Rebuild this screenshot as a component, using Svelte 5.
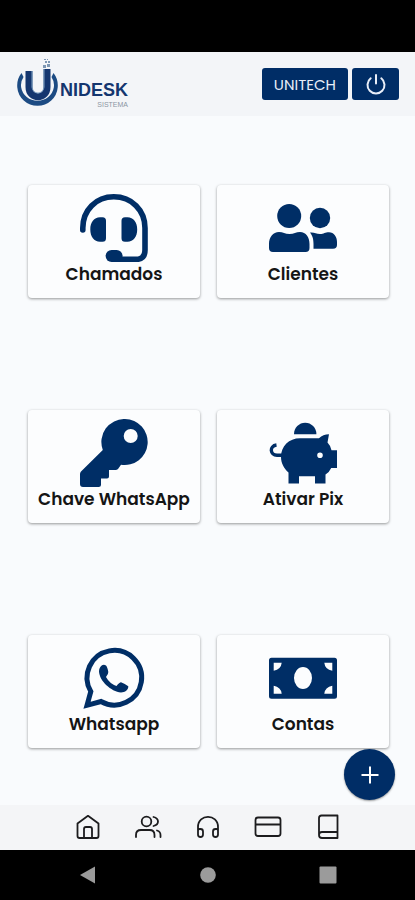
<script>
  const cards = [
    { id: 'headset', label: 'Chamados' },
    { id: 'users', label: 'Clientes' },
    { id: 'key', label: 'Chave WhatsApp' },
    { id: 'pig', label: 'Ativar Pix' },
    { id: 'whatsapp', label: 'Whatsapp' },
    { id: 'money', label: 'Contas' }
  ];
  const tabs = [
    { id: 'home', label: 'Início' },
    { id: 'people', label: 'Clientes' },
    { id: 'headphones', label: 'Chamados' },
    { id: 'card', label: 'Contas' },
    { id: 'book', label: 'Manual' }
  ];
</script>

<div class="screen">
  <div class="status"></div>

  <header>
    <div class="logo">
      <svg class="mark" viewBox="0 0 42 50" aria-hidden="true">
        <path d="M5.500 14A20.300 20.300 0 1 0 37.500 14L35.500 18A16.500 15.500 0 1 1 7.500 18z" fill="#1c4b83" />
        <g fill="none">
          <path d="M13 12V28C13 41 31 41 31 28V10" stroke="#14366f" stroke-width="7" />
          <path d="M16 12V28C17 36 27 36 28 28V10" stroke="#7fa2c4" stroke-width="1" />
        </g>
        <g fill="#7d97b3">
          <path d="M27 6h3v3h-3zM31 5h3v3h-3zM29 2h2v2h-2zM32 2h2v2h-2zM28 0h2v1h-2zM31 0h1v1h-1z" />
        </g>
      </svg>
      <div class="wordmark">
        <span class="name">NIDESK</span>
        <span class="sub">SISTEMA</span>
      </div>
    </div>
    <div class="actions">
      <button class="btn company">UNITECH</button>
      <button class="btn power" aria-label="Sair">
        <svg viewBox="0 0 24 24" width="24" height="24" fill="none" stroke="currentColor" stroke-width="2" stroke-linecap="round">
          <path d="M12 3V11.500M6.700 6.300a8.500 8.500 0 1 0 10.600 0" />
        </svg>
      </button>
    </div>
  </header>

  <main>
    {#each cards as card}
      <button class="card">
        <svg class="icon" viewBox="0 0 68 68" fill="currentColor" aria-hidden="true">
          {#if card.id === 'headset'}
            <path d="M2.800 36V34C2.800 16 16 2.800 33.800 2.800S65 16 65 34V56Q65 65.400 56 65.400H38" fill="none" stroke="currentColor" stroke-width="5.600" stroke-linecap="round" />
            <path d="M20 23.300h2.500q3.500 0 3.500 3.500v17.400q0 3.500-3.500 3.500H20c-6 0-9.700-5-9.700-12.200s3.700-12.200 9.700-12.200z" />
            <path d="M47.500 23.300H45q-3.500 0-3.500 3.500v17.400q0 3.500 3.500 3.500h2.500c6 0 9.700-5 9.700-12.200s-3.700-12.200-9.700-12.200z" />
            <rect x="25.600" y="56" width="17" height="12" rx="6" />
          {:else if card.id === 'users'}
            <circle cx="20.200" cy="22" r="12" />
            <circle cx="51" cy="24" r="10.200" />
            <path d="M10 38C14 38 16 40 20.500 40S27 38 31 38C37 38 40.500 43 40.500 50V54Q40.500 58 36.500 58H4Q0 58 0 54V50C0 43 4 38 10 38z" />
            <path d="M41 38.500C45.500 38 47 40 51 40S56 38.300 60 38.300C65 38.300 68 43 68 48V51Q68 54.700 64 54.700H44.500V50C44.500 44.500 43.500 42 41 38.500z" />
          {:else if card.id === 'key'}
            <path fill-rule="evenodd" d="M45 0A23 23 0 0 0 22.800 31L1 52.500Q0 53.500 0 55V65Q0 68 3 68H18.500Q21 68 21 65.500V59.500H27Q29 59.500 29 57.500V51H35.500Q37 51 38 50L41 45.700A23 23 0 1 0 45 0zM50.700 10a7 7 0 1 1 0 14a7 7 0 0 1 0-14z" />
          {:else if card.id === 'pig'}
            <path d="M25 15.300A11.200 11.600 0 0 1 47.400 15.300z" />
            <path d="M14 36.300H8C1 36 0 27 7.500 26" fill="none" stroke="currentColor" stroke-width="3.400" />
            <path fill-rule="evenodd" d="M31 19.300H50Q54 15.300 60 15.300L58.500 23.500Q61.500 26.500 62.500 31.300H68V49H62.200Q60.500 53 56.500 55.500V64.500H46V57.300H30V64.500H19.500V53.500C15 49.500 12 44 12 38C12 27 20 19.300 31 19.300zM51 33.500a2.800 2.800 0 1 0 0 5.600a2.800 2.800 0 0 0 0-5.600z" />
          {:else if card.id === 'whatsapp'}
            <path d="M7 61.300L10.800 47.500A27.300 27.300 0 1 1 21 57.500z" fill="none" stroke="currentColor" stroke-width="5" stroke-linejoin="miter" />
            <path d="M22 21.300Q24 20.300 26 21.500Q27.500 23 28.300 28Q28.500 30 26 33Q29.500 39.500 36.500 42Q39.500 38.300 41 38.300Q46 40.300 48.300 42.300C48.500 46 45 48.500 41 48.500C31 47.500 19.500 37 19 27.500Q19 23.500 22 21.300z" />
          {:else}
            <path fill-rule="evenodd" d="M2.500 13.700H65.500Q68 13.700 68 16.200V52.200Q68 54.700 65.500 54.700H2.500Q0 54.700 0 52.200V16.200Q0 13.700 2.500 13.700zM34 23a9 11 0 1 0 0 22a9 11 0 0 0 0-22zM4.700 18.700V26.700Q12 25.500 12.700 18.700zM63.300 18.700H55.300Q56 25.500 63.300 26.700zM4.700 49.700H12.700Q12 43 4.700 41.700zM63.300 49.700V41.700Q56 43 55.300 49.700z" />
          {/if}
        </svg>
        <span class="label">{card.label}</span>
      </button>
    {/each}
  </main>

  <nav class="tabs">
    {#each tabs as tab}
      <a href="#{tab.id}" aria-label={tab.label}>
        <svg viewBox="0 0 28 28" width="28" height="28" fill="none" stroke="currentColor" stroke-width="1.800" stroke-linecap="round" stroke-linejoin="round">
          {#if tab.id === 'home'}
            <path d="M3.500 10.500L14 2.800L24.500 10.500V23Q24.500 25 22.500 25H5.500Q3.500 25 3.500 23zM10 25V16Q10 14 12 14H16Q18 14 18 16V25" />
          {:else if tab.id === 'people'}
            <circle cx="12.500" cy="8.500" r="4.800" />
            <path d="M2 24V22Q2 17 7 17H15.500Q20.500 17 20.500 22V24M19.500 4C25.500 5.500 25.500 11.500 19.500 13M23 17.500Q26.500 18.500 26.500 22V24" />
          {:else if tab.id === 'headphones'}
            <path d="M4 20V14C4 0.500 24 0.500 24 14V20M4 21V17.500Q4 16 5.500 16H6.500Q9 16 9 18.500V21.500Q9 24 6.500 24T4 21.500zM24 21V17.500Q24 16 22.500 16H21.500Q19 16 19 18.500V21.500Q19 24 21.500 24T24 21.500z" />
          {:else if tab.id === 'card'}
            <path d="M4 4.500H24Q26.500 4.500 26.500 7V20.500Q26.500 23 24 23H4Q1.500 23 1.500 20.500V7Q1.500 4.500 4 4.500zM1.500 11.500H26.500" />
          {:else}
            <path d="M5 22V5Q5 2.500 7.500 2.500H23.500V25H8Q5 25 5 22Q5 19 8 19H23.500" />
          {/if}
        </svg>
      </a>
    {/each}
    <button class="fab" aria-label="Adicionar">
      <svg viewBox="0 0 20 20" width="20" height="20" fill="none" stroke="currentColor" stroke-width="2">
        <path d="M10 1.500V18.500M1.500 10H18.500" />
      </svg>
    </button>
  </nav>

  <div class="system">
    <button aria-label="Voltar">
      <svg viewBox="0 0 20 20" width="20" height="20"><path d="M2 10L17 1.500V18.500z" fill="currentColor" /></svg>
    </button>
    <button aria-label="Tela inicial">
      <svg viewBox="0 0 20 20" width="20" height="20"><circle cx="10" cy="10" r="7.800" fill="currentColor" /></svg>
    </button>
    <button aria-label="Recentes">
      <svg viewBox="0 0 20 20" width="20" height="20"><rect x="1.500" y="1.500" width="17" height="17" rx="1" fill="currentColor" /></svg>
    </button>
  </div>
</div>

<style>
  :global(body) {
    margin: 0;
  }
  .screen {
    display: flex;
    flex-direction: column;
    min-height: 100vh;
    background: #f9fbfd;
    font-family: Poppins, Inter, sans-serif;
  }
  button {
    margin: 0;
    padding: 0;
    border: 0;
    font-family: inherit;
    cursor: pointer;
  }
  svg {
    display: block;
  }
  .status {
    height: 52px;
    background: #000;
  }
  header {
    display: flex;
    align-items: center;
    justify-content: space-between;
    height: 64px;
    padding: 0 16px;
    background: #f3f5f8;
  }
  .logo {
    display: flex;
    align-items: center;
    gap: 2px;
  }
  .mark {
    width: 42px;
    height: 50px;
  }
  .wordmark {
    display: flex;
    flex-direction: column;
    align-items: flex-end;
    padding-top: 20px;
    font-family: "Liberation Sans", Arial, sans-serif;
  }
  .name {
    color: #14366f;
    font-size: 18px;
    font-weight: 700;
    line-height: 21px;
  }
  .sub {
    color: #8b96a3;
    font-size: 7px;
    line-height: 8px;
  }
  .actions {
    display: flex;
    gap: 4px;
  }
  .btn {
    display: flex;
    align-items: center;
    justify-content: center;
    height: 32px;
    border-radius: 3px;
    background: #002d66;
    color: #e8eef8;
  }
  .company {
    padding: 0 12px;
    font-size: 15px;
  }
  .power {
    width: 47px;
  }
  main {
    flex: 1;
    display: grid;
    grid-template-columns: 1fr 1fr;
    grid-auto-rows: 1fr;
    align-items: center;
    column-gap: 17px;
    padding: 13px 26px 1px 28px;
  }
  .card {
    display: flex;
    flex-direction: column;
    align-items: center;
    padding: 9px 0 12px;
    border-radius: 4px;
    background: #fcfdfe;
    box-shadow: 0 1px 3px rgba(0, 0, 0, 0.4);
    color: #002e66;
  }
  .icon {
    width: 68px;
    height: 68px;
  }
  .label {
    color: #151515;
    font-size: 17px;
    font-weight: 600;
    line-height: 24px;
  }
  .tabs {
    position: relative;
    display: flex;
    align-items: center;
    justify-content: center;
    gap: 32px;
    box-sizing: border-box;
    height: 45px;
    padding-bottom: 2px;
    background: #f4f5f7;
    color: #1c1c1e;
  }
  .tabs a {
    color: inherit;
  }
  .fab {
    position: absolute;
    right: 20px;
    bottom: 50px;
    display: flex;
    align-items: center;
    justify-content: center;
    width: 51px;
    height: 51px;
    border-radius: 50%;
    background: #002d66;
    box-shadow: 0 1px 2px rgba(0, 0, 0, 0.4);
    color: #fff;
  }
  .system {
    display: flex;
    align-items: center;
    justify-content: center;
    gap: 100px;
    height: 50px;
    background: #000;
  }
  .system button {
    background: none;
    color: #9b9b9b;
  }
</style>
